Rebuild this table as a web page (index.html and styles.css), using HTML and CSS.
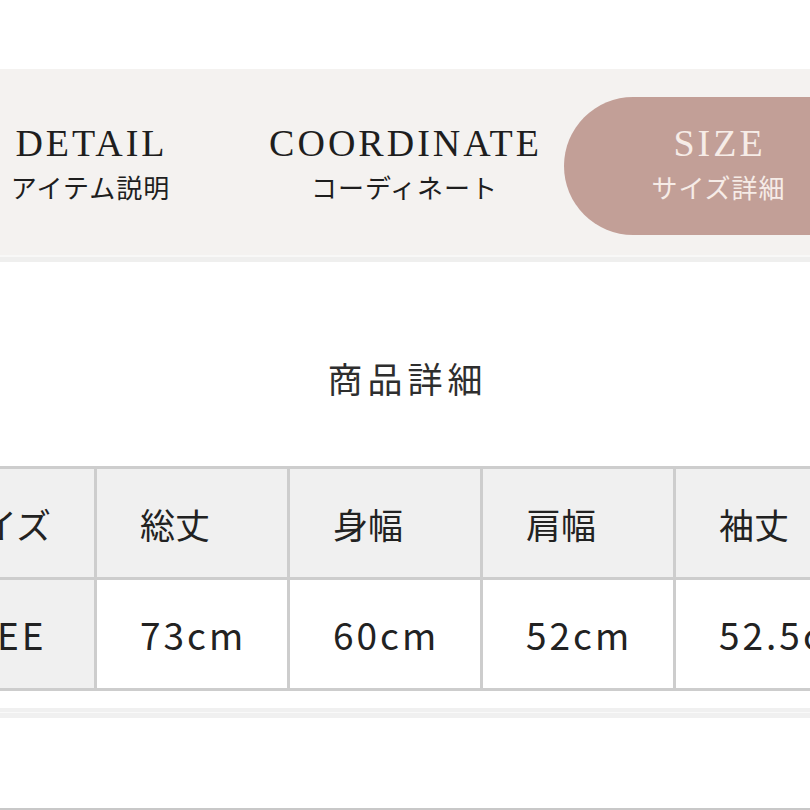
FILE: index.html
```html
<!DOCTYPE html>
<html lang="ja">
<head>
<meta charset="utf-8">
<title>SIZE</title>
<link rel="stylesheet" href="styles.css">
</head>
<body>
<div class="top-space"></div>
<nav class="tabs">
  <div class="tabs-inner">
    <a class="tab">
      <span class="tab-en">DETAIL</span>
      <span class="tab-ja">アイテム説明</span>
    </a>
    <a class="tab">
      <span class="tab-en">COORDINATE</span>
      <span class="tab-ja">コーディネート</span>
    </a>
    <a class="tab tab-active">
      <span class="tab-en">SIZE</span>
      <span class="tab-ja">サイズ詳細</span>
    </a>
  </div>
</nav>
<div class="nav-rule"></div>
<section class="spec">
  <h2 class="spec-title">商品詳細</h2>
  <div class="spec-wrap">
    <div class="spec-grid">
      <div class="cell cell-head">サイズ</div>
      <div class="cell cell-head">総丈</div>
      <div class="cell cell-head">身幅</div>
      <div class="cell cell-head">肩幅</div>
      <div class="cell cell-head">袖丈</div>
      <div class="cell cell-head cell-data">FREE</div>
      <div class="cell cell-data">73cm</div>
      <div class="cell cell-data">60cm</div>
      <div class="cell cell-data">52cm</div>
      <div class="cell cell-data">52.5cm</div>
    </div>
  </div>
</section>
<div class="foot-band"></div>
<div class="foot-rule"></div>
</body>
</html>
```

FILE: styles.css
```css
* { box-sizing: border-box; }
html, body { margin: 0; padding: 0; }
body {
  background: #ffffff;
  width: 810px;
  height: 810px;
  overflow: hidden;
  font-family: "Noto Sans CJK JP", "Noto Sans", sans-serif;
  color: #222;
}
.top-space { height: 69px; }

.tabs {
  height: 186px;
  background: #f4f2f0;
  padding-top: 28px;
  overflow: hidden;
}
.tabs-inner {
  display: flex;
  gap: 6px;
  margin-left: -64px;
  width: 940px;
}
.tab {
  width: 308px;
  height: 138px;
  display: flex;
  flex-direction: column;
  align-items: center;
  padding-top: 27px;
  color: #1e1e1e;
  text-decoration: none;
}
.tab-active {
  background: #c29f97;
  border-radius: 69px 0 0 69px;
  color: #f6ece7;
}
.tab-en {
  font-family: "Liberation Serif", "DejaVu Serif", serif;
  font-size: 38px;
  line-height: 38px;
  letter-spacing: 3px;
  margin-right: -3px;
}
.tab-ja {
  margin-top: 12px;
  font-size: 26px;
  line-height: 26px;
  letter-spacing: 1px;
  margin-right: -1px;
}

.nav-rule {
  height: 7px;
  background: linear-gradient(#f8f8f7 0, #f8f8f7 2px, #efefee 2px, #efefee 7px);
}

.spec { padding-top: 98px; }
.spec-title {
  margin: 0;
  text-align: center;
  font-weight: 400;
  font-size: 35px;
  line-height: 35px;
  letter-spacing: 5px;
  padding-left: 5px;
  color: #2e2e2e;
}
.spec-wrap {
  margin-top: 71px;
  overflow: hidden;
}
.spec-grid {
  display: grid;
  grid-template-columns: repeat(5, 190px);
  grid-auto-rows: 108px;
  gap: 3px;
  padding: 3px;
  background: #cdcdcd;
  width: 968px;
  margin-left: -99px;
}
.cell {
  background: #fff;
  display: flex;
  align-items: center;
  padding-left: 43px;
  font-size: 35px;
  letter-spacing: 0;
  white-space: nowrap;
  color: #222;
}
.cell-data {
  font-size: 37px;
  letter-spacing: 3px;
}
.cell-head { background: #f0f0f0; }

.foot-band {
  margin-top: 17px;
  height: 10px;
  background: linear-gradient(#f0f0f0 0, #f0f0f0 4px, #f9f9f9 4px, #f9f9f9 5px, #f0f0f0 5px);
}
.foot-rule {
  margin-top: 90px;
  height: 2px;
  background: #c8c8c8;
}
```
